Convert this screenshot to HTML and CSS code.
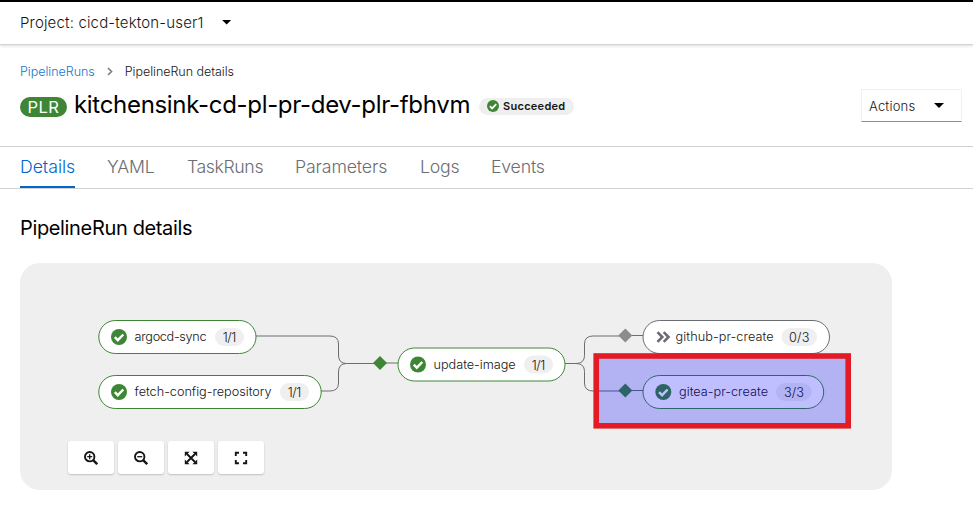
FILE: index.html
```
<!DOCTYPE html>
<html lang="en">
<head>
<meta charset="utf-8">
<title>PipelineRun details</title>
<link rel="stylesheet" href="styles.css">
</head>
<body>
<div class="project-bar"><span>Project: cicd-tekton-user1</span><i class="caret"></i></div>
<header class="page-header">
  <nav class="breadcrumb">
    <a>PipelineRuns</a>
    <svg width="6" height="9" viewBox="0 0 6 9"><path d="M1 1l3.500 3.500L1 8" fill="none" stroke="#7d8084" stroke-width="1.700"/></svg>
    <span>PipelineRun details</span>
  </nav>
  <div class="title-row">
    <span class="kind">PLR</span>
    <h1>kitchensink-cd-pl-pr-dev-plr-fbhvm</h1>
    <span class="status"><svg width="12" height="12" viewBox="0 0 16 16"><circle cx="8" cy="8" r="8" fill="#3e8635"/><path d="M3.800 8.200l3 3 5.500-5.700" fill="none" stroke="#fff" stroke-width="2.300"/></svg>Succeeded</span>
    <button class="actions"><span>Actions</span><i class="caret"></i></button>
  </div>
</header>
<nav class="tabs">
  <a class="tab active t1">Details</a><a class="tab t2">YAML</a><a class="tab t3">TaskRuns</a><a class="tab t4">Parameters</a><a class="tab t5">Logs</a><a class="tab t6">Events</a>
</nav>
<main>
  <h2>PipelineRun details</h2>
  <section class="graph">
    <svg class="canvas" width="872" height="227" viewBox="20 263 872 227">
      <defs>
        <g id="ok"><circle r="8"/><path d="M-4.200 .200l3 3L4.300-2.500" fill="none" stroke="#fff" stroke-width="2.400"/></g>
        <path id="diamond" d="M0-7L7 0 0 7-7 0z"/>
      </defs>
      <g class="edges">
        <path d="M256 336H330q8.500 0 8.500 8V355q0 8.500 8 8.500H374"/>
        <path d="M321 391H330q8.500 0 8.500-8V372q0-8.500 8-8.500"/>
        <path d="M380 363H398"/>
        <path d="M565 363.500H576q8.500 0 8.500-8V344q0-8 8.500-8H620"/>
        <path d="M576 363.500q8.500 0 8.500 8V383q0 8 8.500 8H620"/>
        <path d="M626 335.500H643M626 390.500H643"/>
      </g>
      <use href="#diamond" x="380" y="363" fill="#3e8635"/>
      <use href="#diamond" x="625.300" y="335.500" fill="#8a8d90"/>
      <use href="#diamond" x="625.300" y="390.500" fill="#3e8635"/>
      <g class="pills">
        <rect x="98.800" y="320.500" width="157.200" height="33" rx="16.500"/>
        <rect x="98.800" y="375.500" width="222.400" height="33" rx="16.500"/>
        <rect x="398" y="348" width="167" height="33" rx="16.500"/>
        <rect class="skipped" x="643" y="320.500" width="186.500" height="33" rx="16.500"/>
        <rect x="643" y="375.500" width="180.700" height="33" rx="16.500"/>
      </g>
      <g fill="#3e8635">
        <use href="#ok" x="119" y="337"/><use href="#ok" x="119" y="392"/><use href="#ok" x="418" y="364.500"/><use href="#ok" x="663.300" y="392"/>
      </g>
      <path d="M657.500 332.200l4.800 4.800-4.800 4.800M663.700 332.200l4.800 4.800-4.800 4.800" fill="none" stroke="#6a6e73" stroke-width="2.600"/>
      <g class="badges">
        <rect x="215" y="328" width="29" height="18" rx="9"/><rect x="280" y="383" width="29" height="18" rx="9"/><rect x="524" y="355.500" width="29" height="18" rx="9"/><rect x="781.500" y="328" width="35.500" height="18" rx="9"/><rect x="776" y="383" width="35.500" height="18" rx="9"/>
      </g>
      <g class="labels">
        <text x="134.600" y="341" textLength="72">argocd-sync</text><text x="222.700" y="341.500" textLength="13.500">1/1</text>
        <text x="134.600" y="396" textLength="137">fetch-config-repository</text><text x="287.700" y="396.500" textLength="13.500">1/1</text>
        <text x="433.600" y="369" textLength="82">update-image</text><text x="531.700" y="369.500" textLength="13.500">1/1</text>
        <text x="675.600" y="341" textLength="98">github-pr-create</text><text x="789" y="341.500" textLength="20.500">0/3</text>
        <text x="679" y="396" textLength="89">gitea-pr-create</text><text x="784" y="396.500" textLength="20">3/3</text>
      </g>
      <rect class="highlight" x="596.200" y="356" width="252" height="69.800"/>
    </svg>
    <div class="toolbar">
      <button><svg width="14" height="14" viewBox="0 0 14 14"><circle cx="5.700" cy="5.700" r="4.700"/><path class="handle" d="M9.200 9.200l4 4"/><path class="thin" d="M3.200 5.700h5M5.700 3.200v5"/></svg></button>
      <button><svg width="14" height="14" viewBox="0 0 14 14"><circle cx="5.700" cy="5.700" r="4.700"/><path class="handle" d="M9.200 9.200l4 4"/><path class="thin" d="M3.200 5.700h5"/></svg></button>
      <button><svg width="14" height="14" viewBox="0 0 14 14"><path d="M3 3l8 8M11 3l-8 8"/><path class="solid" d="M.800.800h4.800L.800 5.600zM13.200.800v4.800L8.400.800zM.800 13.200V8.400l4.800 4.800zM13.200 13.200H8.400l4.800-4.800z"/></svg></button>
      <button><svg width="14" height="14" viewBox="0 0 14 14"><path d="M1.800 5V1.800H5M9 1.800h3.200V5M12.200 9v3.200H9M5 12.200H1.800V9"/></svg></button>
    </div>
  </section>
</main>
</body>
</html>
```
FILE: styles.css
```
*{box-sizing:border-box}
body{margin:0;background:#fff;color:#151515;font-family:Inter,Roboto,sans-serif;font-size:13px;overflow:hidden}
.project-bar{height:45px;border-top:2px solid #000;border-bottom:1px solid #d2d2d2;box-shadow:0 1px 3px rgba(0,0,0,.14);padding:0 20px 2px;display:flex;align-items:center;gap:18px;font-size:15px;font-weight:350;letter-spacing:.16px}
.caret{width:10px;height:5px;background:#000;clip-path:polygon(0 0,100% 0,50% 100%)}
.page-header{height:101px;padding:18px 11px 0 20px}
.breadcrumb{height:17px;display:flex;align-items:center;gap:12px;font-size:12.5px;letter-spacing:-.03px;font-weight:350}
.breadcrumb a{color:#1475d1}
.title-row{height:48px;display:flex;align-items:center;margin-top:1px}
.kind{width:47px;height:20px;margin-top:4px;border-radius:10px;background:#3e8635;color:#fff;font-size:16.5px;line-height:20px;letter-spacing:.5px;text-align:center}
h1{margin:0 0 0 7px;width:398px;font-size:24px;font-weight:400;line-height:30px;letter-spacing:-.31px;color:#000;white-space:nowrap}
.status{margin:2px 0 0 7px;width:95px;height:17px;border-radius:9px;background:#efefef;display:flex;align-items:center;padding-left:8px;gap:4px;font-size:11px;font-weight:600;letter-spacing:.28px}
.actions{margin-left:auto;margin-top:1px;width:101px;height:33px;border:1px solid #f0f0f0;border-bottom-color:#8a8d90;background:#fff;padding:0 17px 0 7px;display:flex;align-items:center;justify-content:space-between;font:350 13px Inter,sans-serif;letter-spacing:.2px;color:#151515}
.tabs{height:43px;border-top:1px solid #d2d2d2;border-bottom:1px solid #d2d2d2;padding-left:20px;display:flex;gap:32px}
.tab{height:41px;line-height:40px;font-size:17.7px;font-weight:300;letter-spacing:-.2px;color:#6a6e73;white-space:nowrap}
.tab.active{color:#06c;border-bottom:2px solid #06c;letter-spacing:-.05px}
.t1{width:55px}.t2{width:48px;letter-spacing:-.2px}.t3{width:76px;letter-spacing:-.4px}.t4{width:93px;letter-spacing:-.12px}.t5{width:39px}.t6{width:56px}
main{padding:25px 20px 0}
h2{margin:0;height:28px;line-height:28px;font-size:20px;font-weight:400;letter-spacing:-.35px;color:#000}
.graph{position:relative;width:872px;height:227px;margin-top:21px;background:#efefef;border-radius:20px}
.canvas{display:block;border-radius:20px}
.edges{fill:none;stroke:#6a6e73;stroke-width:1}
.pills{fill:#fff;stroke:#3e8635;stroke-width:1}
.pills .skipped{stroke:#6a6e73}
.badges{fill:#efefef}
.labels{font-size:12.7px;font-weight:350;fill:#151515}
.highlight{fill:rgba(0,0,255,.25);stroke:#e21b24;stroke-width:5.6}
.toolbar{position:absolute;left:48px;top:178px;display:flex;gap:4px}
.toolbar button{width:46px;height:33px;border:0;border-radius:3px;background:#fff;box-shadow:0 1px 2px rgba(0,0,0,.2);padding:0;display:flex;align-items:center;justify-content:center}
.toolbar svg{fill:none;stroke:#151515;stroke-width:1.9}
.toolbar .thin{stroke-width:1.3}
.toolbar .handle{stroke-width:2.4}
.toolbar .solid{fill:#151515;stroke:none}
```
